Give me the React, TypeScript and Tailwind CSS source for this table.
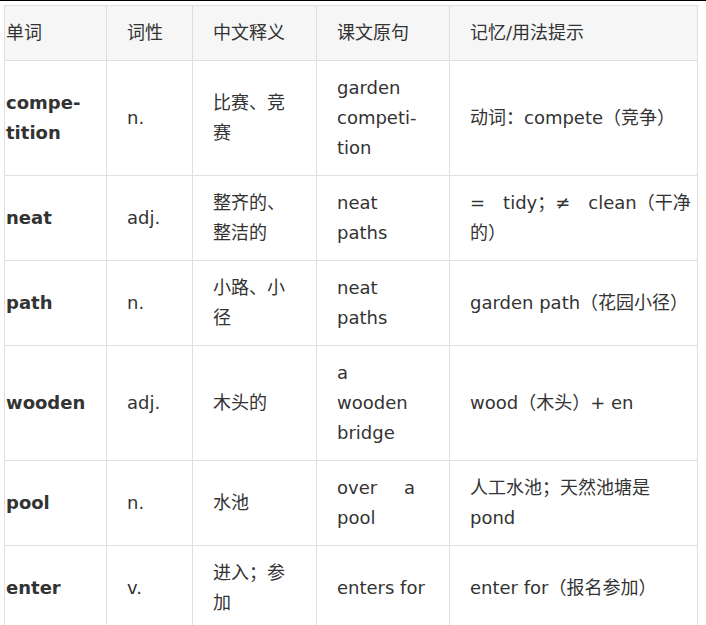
import React from 'react';

type Line = { text: string; justify?: boolean };

const rows: { word: string; pos: string; cn: string; src: Line[]; tip: string }[] = [
  { word: 'compe\u00ADtition', pos: 'n.', cn: '比赛、竞赛', src: [{ text: 'garden' }, { text: 'competi-' }, { text: 'tion' }], tip: '动词：compete（竞争）' },
  { word: 'neat', pos: 'adj.', cn: '整齐的、整洁的', src: [{ text: 'neat' }, { text: 'paths' }], tip: '=　tidy；≠　clean（干净的）' },
  { word: 'path', pos: 'n.', cn: '小路、小径', src: [{ text: 'neat' }, { text: 'paths' }], tip: 'garden path（花园小径）' },
  { word: 'wooden', pos: 'adj.', cn: '木头的', src: [{ text: 'a' }, { text: 'wooden' }, { text: 'bridge' }], tip: 'wood（木头）+ en' },
  { word: 'pool', pos: 'n.', cn: '水池', src: [{ text: 'over a', justify: true }, { text: 'pool' }], tip: '人工水池；天然池塘是 pond' },
  { word: 'enter', pos: 'v.', cn: '进入；参加', src: [{ text: 'enters for' }], tip: 'enter for（报名参加）' },
];

const heads = ['单词', '词性', '中文释义', '课文原句', '记忆/用法提示'];

export default function App() {
  const cell = 'border border-[#dfdfdf] py-3 align-middle text-left text-justify';
  const pad = ['pl-[1px] pr-5', 'px-5', 'px-5', 'px-5', 'pl-5 pr-[2px]'];

  return (
    <div
      className="min-h-screen bg-white text-[#333] text-[18px] leading-[30px]"
      style={{ fontFamily: '"DejaVu Sans", "Noto Sans CJK SC", sans-serif' }}
    >
      <div className="h-px bg-black" />
      <div className="pt-[4px] pl-1">
        <table className="table-fixed border-collapse w-[693px]">
          <colgroup>
            <col className="w-[102px]" />
            <col className="w-[86px]" />
            <col className="w-[124px]" />
            <col className="w-[133px]" />
            <col className="w-[248px]" />
          </colgroup>
          <thead>
            <tr className="bg-[#f6f6f6]">
              {heads.map((h, i) => (
                <th key={h} className={`${cell} ${pad[i]} font-normal`}>{h}</th>
              ))}
            </tr>
          </thead>
          <tbody>
            {rows.map((r) => (
              <tr key={r.word}>
                <td className={`${cell} ${pad[0]} font-bold`}>{r.word}</td>
                <td className={`${cell} ${pad[1]}`}>{r.pos}</td>
                <td className={`${cell} ${pad[2]}`}>{r.cn}</td>
                <td className={`${cell} ${pad[3]}`}>
                  {r.src.map((l, i) => (
                    <div key={i} className={`whitespace-nowrap ${l.justify ? 'w-[78px] [text-align-last:justify]' : ''}`}>
                      {l.text}
                    </div>
                  ))}
                </td>
                <td className={`${cell} ${pad[4]}`}>{r.tip}</td>
              </tr>
            ))}
          </tbody>
        </table>
      </div>
    </div>
  );
}
